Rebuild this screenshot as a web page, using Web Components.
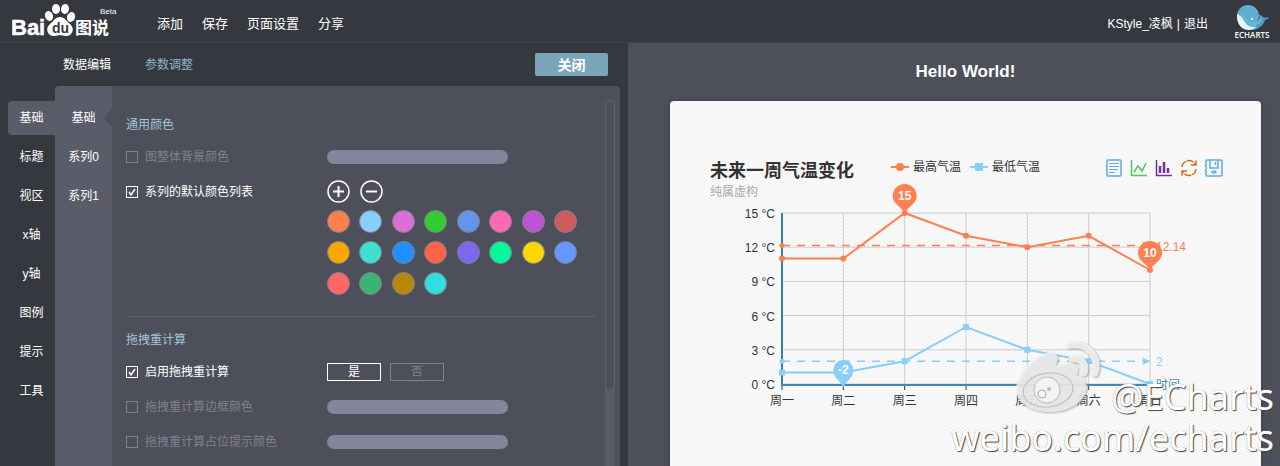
<!DOCTYPE html>
<html lang="zh-CN">
<head>
<meta charset="utf-8">
<title>Baidu 图说</title>
<style>
  body { margin: 0; font: 12px/16px "Liberation Sans", "Noto Sans CJK SC", sans-serif; color: #fff; background: #4d4f5a; }
</style>
</head>
<body>
<chart-studio></chart-studio>
<script>
const define = (name, html, setup) => customElements.define(name, class extends HTMLElement {
  connectedCallback() {
    if (this.shadowRoot) return;
    const t = document.createElement('template');
    t.innerHTML = html;
    this.attachShadow({ mode: 'open' }).append(t.content.cloneNode(true));
    if (setup) setup.call(this, this.shadowRoot);
  }
});

define('studio-logo', `
<style>
  :host { display: block; width: 108px; }
  svg { display: block; font-family: "Liberation Sans", "Noto Sans CJK SC", sans-serif; }
</style>
<svg width="108" height="42" viewBox="0 0 108 42" fill="#fff" role="img" aria-label="Baidu 图说 Beta">
  <text x="-1" y="35" font-size="22" font-weight="bold" stroke="#fff" stroke-width=".5">Bai</text>
  <ellipse cx="37" cy="16" rx="4" ry="5" transform="rotate(-20 37 16)"/>
  <ellipse cx="44" cy="9" rx="4" ry="5"/>
  <ellipse cx="53" cy="9" rx="4" ry="5" transform="rotate(8 53 9)"/>
  <ellipse cx="59" cy="17" rx="4" ry="5" transform="rotate(22 59 17)"/>
  <path d="M48 17c5 0 6 4 10 7 5 4 3 12-4 12-3 0-4-1-6-1s-3 1-6 1c-7 0-9-8-4-12 4-3 5-7 10-7z"/>
  <text x="40" y="33" font-size="14" font-weight="bold" fill="#36383f">du</text>
  <text x="63" y="34" font-size="17" font-weight="bold">图说</text>
  <text x="88" y="14" font-size="8">Beta</text>
</svg>`);

define('echarts-logo', `
<style>:host { display: block; width: 34px; } svg { display: block; overflow: visible; }</style>
<svg width="34" height="40" viewBox="0 0 34 40" role="img" aria-label="ECharts">
  <circle cx="12" cy="15" r="11" fill="#5fadd0"/>
  <path d="M1 14c3-4 8 1 11 5 3 3 7 4 10 1 2-2 2-5 1-7 3 3 4 4 6 4-1 6-6 12-14 12C7 29 1 24 1 14z" fill="#69b5d6"/>
  <path d="M1 13c3 1 5 3 7 7 3 5 7 7 12 6-4 4-11 4-15 0-3-3-4-7-4-13z" fill="#e8f3f8"/>
  <path d="M20 24c4-1 6-4 6-6-2-1-2-2-1-4 1 2 3 2 4 3 1-1 3-1 4 1-2 0-3 0-4 1-1 4-4 7-9 8z" fill="#4a9ccd"/>
  <circle cx="16" cy="18" r="1" fill="#fff"/>
  <text x="16" y="37" text-anchor="middle" font-family="Open Sans, sans-serif" font-weight="600" font-size="8" fill="#fff">ECHARTS</text>
</svg>`);

define('top-bar', `
<style>
  :host { display: flex; align-items: center; box-sizing: border-box; height: 43px; padding: 0 10px 0 12px;
    background: #36383f; border-bottom: 1px solid #42444c; }
  nav { display: flex; gap: 19px; margin-left: 37px; flex: 1; padding-top: 6px; }
  a { color: #fff; text-decoration: none; }
  nav a { font-size: 13px; line-height: 20px; }
  .user { display: flex; gap: 4px; margin-right: 28px; padding-top: 6px; }
</style>
<studio-logo></studio-logo>
<nav><a href="#add">添加</a><a href="#save">保存</a><a href="#page">页面设置</a><a href="#share">分享</a></nav>
<div class="user"><a href="#me">KStyle_凌枫</a><span>|</span><a href="#quit">退出</a></div>
<echarts-logo></echarts-logo>`);

define('side-nav', `
<style>
  :host { display: flex; flex-direction: column; gap: 5px; padding: 15px 0 0 8px; width: 47px; }
  a { height: 34px; line-height: 34px; text-align: center; color: #fff; text-decoration: none; border-radius: 4px 0 0 4px; }
  a.on { background: #5b5c69; }
</style>`, function (root) {
  this.getAttribute('items').split(',').forEach((label, i) => {
    const a = document.createElement('a');
    a.href = '#' + label; a.textContent = label;
    if (!i) a.className = 'on';
    root.append(a);
  });
});

define('sub-nav', `
<style>
  :host { display: flex; flex-direction: column; gap: 5px; padding-top: 15px; width: 57px; background: #5b5c69; border-radius: 4px 0 0 0; }
  a { height: 34px; line-height: 34px; text-align: center; color: #fff; text-decoration: none; position: relative; }
  a.on::after { content: ""; position: absolute; right: 0; top: 8px; border: 9px solid transparent; border-left: 0; border-right: 8px solid #4d4f5a; }
</style>
<a class="on" href="#base">基础</a><a href="#s0">系列0</a><a href="#s1">系列1</a>`);

define('option-row', `
<style>
  :host { display: grid; grid-template-columns: 201px minmax(0, 1fr); align-items: start; }
  label { display: flex; align-items: center; gap: 7px; height: 24px; color: #80818f; }
  :host([on]) label { color: #fff; }
  input { appearance: none; box-sizing: border-box; width: 12px; height: 12px; margin: 0; border: 1px solid currentColor; color: inherit; }
  :host([on]) input {
    background: url("data:image/svg+xml,%3Csvg xmlns='http://www.w3.org/2000/svg' viewBox='0 0 10 10'%3E%3Cpath d='M2 5l2 3 4-6' fill='none' stroke='white' stroke-width='1.5'/%3E%3C/svg%3E"); }
</style>
<label><input type="checkbox"><slot name="label"></slot></label>
<slot></slot>`, function (root) {
  root.querySelector('input').checked = this.hasAttribute('on');
});

define('color-field', `
<style>
  :host { display: flex; align-items: center; height: 24px; }
  input { box-sizing: border-box; width: 181px; height: 14px; margin: 0; padding: 0 8px; border: 0; border-radius: 7px; background: #83859a; }
</style>
<input type="text" aria-label="颜色">`);

define('color-list', `
<style>
  :host { display: flex; flex-direction: column; gap: 7px; width: 250px; }
  .tools { display: flex; gap: 10px; }
  .grid { display: grid; grid-template-columns: repeat(8, 23px); justify-content: space-between; row-gap: 8px; }
  button { box-sizing: border-box; width: 23px; height: 23px; padding: 0; border: 1px solid #80818c; border-radius: 50%; background: none; }
  .tools button { border: 0; }
  svg { display: block; fill: none; stroke: #fff; stroke-width: 2; }
  svg circle { stroke-width: 1.5; }
</style>
<div class="tools">
  <button aria-label="添加颜色"><svg width="23" height="23"><circle cx="11.5" cy="11.5" r="10.5"/><path d="M6 11.5h11M11.5 6v11"/></svg></button>
  <button aria-label="删除颜色"><svg width="23" height="23"><circle cx="11.5" cy="11.5" r="10.5"/><path d="M6 11.5h11"/></svg></button>
</div>
<div class="grid"></div>`, function (root) {
  const colors = ['#ff7f50', '#87cefa', '#da70d6', '#32cd32', '#6495ed', '#ff69b4', '#ba55d3', '#cd5c5c',
    '#ffa500', '#40e0d0', '#1e90ff', '#ff6347', '#7b68ee', '#00fa9a', '#ffd700', '#6699ff',
    '#ff6666', '#3cb371', '#b8860b', '#30e0e0'];
  for (const c of colors) {
    const b = document.createElement('button');
    b.style.background = c;
    b.setAttribute('aria-label', c);
    root.querySelector('.grid').append(b);
  }
});

define('yes-no', `
<style>
  :host { display: flex; align-items: center; gap: 9px; height: 24px; }
  button { box-sizing: border-box; width: 54px; height: 18px; padding: 0; font: inherit; line-height: 16px; color: #80818f; background: none; border: 1px solid #80818f; }
  button.on { color: #fff; border-color: #fff; }
</style>
<button class="on">是</button><button>否</button>`);

define('scroll-track', `
<style>
  :host { display: block; box-sizing: border-box; width: 10px; background: #5b5c69; border-radius: 5px 5px 0 0; }
  div { box-sizing: border-box; height: 290px; border: 1px solid #5f606c; border-radius: 5px; background: #4d4f5a; }
</style>
<div></div>`);

define('option-panel', `
<style>
  :host { display: flex; flex: 1; min-width: 0; background: #4d4f5a; border-radius: 0 4px 0 0; }
  .form { flex: 1; min-width: 0; padding: 31px 9px 0 14px; }
  h2 { margin: 0; font-size: 12px; line-height: 16px; font-weight: normal; color: #a3c6db; }
  .group { display: flex; flex-direction: column; gap: 11px; padding-top: 12px; }
  hr { margin: 21px 0 15px; border: 0; border-top: 1px solid #5f606c; }
  scroll-track { margin: 14px 5px 0 0; }
</style>
<div class="form">
  <h2>通用颜色</h2>
  <div class="group">
    <option-row><span slot="label">图整体背景颜色</span><color-field></color-field></option-row>
    <option-row on><span slot="label">系列的默认颜色列表</span><color-list></color-list></option-row>
  </div>
  <hr>
  <h2>拖拽重计算</h2>
  <div class="group">
    <option-row on><span slot="label">启用拖拽重计算</span><yes-no></yes-no></option-row>
    <option-row><span slot="label">拖拽重计算边框颜色</span><color-field></color-field></option-row>
    <option-row><span slot="label">拖拽重计算占位提示颜色</span><color-field></color-field></option-row>
  </div>
</div>
<scroll-track></scroll-track>`);

define('editor-pane', `
<style>
  :host { display: flex; flex-direction: column; background: #36383f; padding-right: 8px; box-sizing: border-box; }
  header { display: flex; align-items: center; height: 43px; padding: 0 12px 0 63px; gap: 34px; }
  header a { color: #fff; text-decoration: none; }
  header a.on { color: #8db5cf; }
  button { margin-left: auto; width: 73px; height: 23px; padding: 0; border: 0; border-radius: 2px; background: #7ba6ba; color: #fff; font: bold 14px/20px "Liberation Sans", "Noto Sans CJK SC", sans-serif; }
  .cols { display: flex; flex: 1; }
</style>
<header><a href="#data">数据编辑</a><a class="on" href="#opts">参数调整</a><button>关闭</button></header>
<div class="cols">
  <side-nav items="基础,标题,视区,x轴,y轴,图例,提示,工具"></side-nav>
  <sub-nav></sub-nav>
  <option-panel></option-panel>
</div>`);

define('chart-tools', `
<style>
  :host { display: flex; gap: 7px; }
  button { width: 18px; height: 18px; padding: 0; border: 0; background: none; }
  svg { display: block; fill: none; stroke-width: 1.5; }
</style>
<button aria-label="数据视图"><svg width="18" height="18" stroke="#5fa8ec"><rect x="2" y="1" width="14" height="16" rx="1"/><path d="M4 4.5h10M4 7.5h10M4 10.5h9M4 13.5h6" stroke-width="1.2"/></svg></button>
<button aria-label="折线图"><svg width="18" height="18" stroke="#4fc656"><path d="M1.500 1v15.500H17M4 13l4-6 4 5 4-8"/></svg></button>
<button aria-label="柱形图"><svg width="18" height="18" stroke="#75309a"><path d="M1.500 1v15.500H17"/><path d="M5 7v7M9 3v11M13 9v5" stroke-width="2.500"/></svg></button>
<button aria-label="还原"><svg width="18" height="18" stroke="#d2691e"><path d="M2 8a7 7 0 0 1 13-3M16 10a7 7 0 0 1-13 3" stroke-dasharray="7 1"/><path d="M16 1.500V6h-5M2 16.500V12h5"/></svg></button>
<button aria-label="保存为图片"><svg width="18" height="18" stroke="#5fa8ec"><rect x="1" y="1" width="16" height="16" rx="1"/><path d="M5 1v8h8V1M10.500 3v3"/><ellipse cx="9" cy="13" rx="2" ry="1"/></svg></button>`);

define('temperature-chart', `
<style>
  :host { display: block; }
  svg { display: block; width: 100%; overflow: visible; font: 12px "Liberation Sans", "Noto Sans CJK SC", sans-serif; }
</style>
<svg viewBox="0 0 591 265" role="img" aria-label="未来一周气温变化"></svg>`, function (root) {
  const left = 112, right = 480, base = 183, unit = 11.4, step = (right - left) / 6;
  const x = i => left + i * step, y = v => base - v * unit;
  let s = '';
  for (let v = 0; v <= 15; v += 3) {
    s += `<path d="M${left} ${y(v)}H${right}" stroke="#ccc"/><text x="105" y="${y(v) + 5}" text-anchor="end" fill="#333">${v} °C</text>`;
  }
  ['周一', '周二', '周三', '周四', '周五', '周六', '周日'].forEach((d, i) => {
    s += `<path d="M${x(i)} ${y(15)}V${base}" stroke="#ccc"/><path d="M${x(i)} ${base}v6" stroke="#333"/><text x="${x(i)}" y="${base + 21}" text-anchor="middle" fill="#333">${d}</text>`;
  });
  s += `<path d="M${left} ${y(15)}V${base + 1}" stroke="#2f7fae" stroke-width="2"/><path d="M${left - 1} ${base + 1}H${right}" stroke="#4488bb" stroke-width="2"/>`;
  s += `<text x="486" y="${base + 5}" fill="#4488bb">时间</text>`;
  const series = (data, color, mark, avg) => {
    s += `<path d="M${left} ${y(avg)}H${right}" stroke="${color}" stroke-width="1.5" stroke-dasharray="8 7"/>`;
    s += `<path d="M${right - 8} ${y(avg) - 4}L${right} ${y(avg)}l-8 4 2-4z" fill="${color}"/><circle cx="${left}" cy="${y(avg)}" r="2.500" fill="${color}"/>`;
    s += `<text x="486" y="${y(avg) + 5}" fill="${color}">${avg}</text>`;
    s += `<polyline points="${data.map((v, i) => x(i) + ',' + y(v)).join(' ')}" fill="none" stroke="${color}" stroke-width="2"/>`;
    data.forEach((v, i) => {
      s += mark === 'circle' ? `<circle cx="${x(i)}" cy="${y(v)}" r="3" fill="${color}"/>`
        : `<rect x="${x(i) - 3}" y="${y(v) - 3}" width="6" height="6" fill="${color}"/>`;
    });
  };
  const pin = (cx, tip, r, color, label) => {
    s += `<path d="M${cx} ${tip}C${cx - 3} ${tip - 6} ${cx - r} ${tip - 9} ${cx - r} ${tip - 17}a${r} ${r} 0 0 1 ${2 * r} 0C${cx + r} ${tip - 9} ${cx + 3} ${tip - 6} ${cx} ${tip}z" fill="${color}"/>`;
    s += `<text x="${cx}" y="${tip - 13}" text-anchor="middle" font-weight="bold" fill="#fff">${label}</text>`;
  };
  series([11, 11, 15, 13, 12, 13, 10], '#ff7f50', 'circle', 12.14);
  series([1, 1, 2, 5, 3, 2, 0], '#87cefa', 'rect', 2);
  pin(x(2), y(15), 12, '#ff7f50', '15');
  pin(x(6), y(10), 12, '#ff7f50', '10');
  pin(x(1), base + 3, 10, '#87cefa', '-2');
  root.querySelector('svg').innerHTML = s;
});

define('chart-card', `
<style>
  :host { display: block; border-radius: 4px 4px 0 0; color: #333;
    background: conic-gradient(#f4f4f4 25%, #fbfbfb 0 50%, #f4f4f4 0 75%, #fbfbfb 0) 0 0 / 4px 4px; box-shadow: 0 0 4px #3a3b44; }
  header { display: grid; grid-template-columns: 180px minmax(0, 1fr) auto; align-items: start; height: 100px; box-sizing: border-box; padding: 58px 38px 0 40px; }
  h2 { margin: 0; font-size: 18px; line-height: 24px; }
  p { margin: 1px 0 0; line-height: 16px; color: #aaa; }
  .legend { display: flex; gap: 8px; line-height: 16px; }
  .legend span { display: flex; align-items: center; gap: 3px; }
  .legend svg { display: block; }
</style>
<header>
  <div><h2>未来一周气温变化</h2><p>纯属虚构</p></div>
  <div class="legend">
    <span><svg width="20" height="10" fill="#ff7f50"><path d="M1 5h5M14 5h5" stroke="#ff7f50" stroke-width="2"/><circle cx="10" cy="5" r="4"/></svg>最高气温</span>
    <span><svg width="20" height="10" fill="#87cefa"><path d="M1 5h5M14 5h5" stroke="#87cefa" stroke-width="2"/><rect x="6" y="1" width="8" height="8"/></svg>最低气温</span>
  </div>
  <chart-tools></chart-tools>
</header>
<temperature-chart></temperature-chart>`);

define('weibo-mark', `
<style>
  :host { position: absolute; right: 6px; bottom: 8px; display: grid; justify-items: end; pointer-events: none;
    font: 36px/41px "Noto Sans", sans-serif; color: #fff; text-shadow: 1px 1px 1px #444, 0 0 1px #999; }
  div { display: flex; align-items: center; gap: 9px; }
  svg { margin: -48px 0 -10px; filter: drop-shadow(1px 1px 1px #999); }
</style>
<div>
  <svg width="88" height="74" viewBox="0 0 88 74" fill="#f8f8f8" fill-opacity=".75">
    <path d="M42 13c3 3 1 8 0 12 8-5 21-5 22 3 0 3-1 5-1 7 8 2 11 8 9 15-3 12-18 21-36 21C17 71 2 62 2 48 2 30 30 4 42 13z"/>
    <ellipse cx="34" cy="49" rx="25" ry="17" fill="none" stroke="#bbb" transform="rotate(-8 34 49)"/>
    <circle cx="33" cy="49" r="13" stroke="#bbb"/>
    <circle cx="28" cy="53" r="4" stroke="#aaa"/>
    <circle cx="35" cy="48" r="2" fill="#aaa"/>
    <path d="M56 4c17-3 30 12 25 28M58 18c9-2 15 5 12 14" fill="none" stroke="#f6f6f6" stroke-width="7" stroke-opacity=".85" stroke-linecap="round"/>
  </svg>
  <span>@ECharts</span>
</div>
<span>weibo.com/echarts</span>`);

define('preview-pane', `
<style>
  :host { display: flex; flex-direction: column; padding: 0 19px 0 42px; position: relative; box-sizing: border-box; }
  h1 { margin: 19px 0 19px; text-align: center; font-size: 17px; line-height: 20px; }
  chart-card { flex: 1; }
</style>
<h1>Hello World!</h1>
<chart-card></chart-card>
<weibo-mark></weibo-mark>`);

define('chart-studio', `
<style>
  :host { display: flex; flex-direction: column; min-height: 100vh; }
  main { flex: 1; display: grid; grid-template-columns: minmax(0, 628px) minmax(0, 1fr); }
</style>
<top-bar></top-bar>
<main><editor-pane></editor-pane><preview-pane></preview-pane></main>`);
</script>
</body>
</html>
